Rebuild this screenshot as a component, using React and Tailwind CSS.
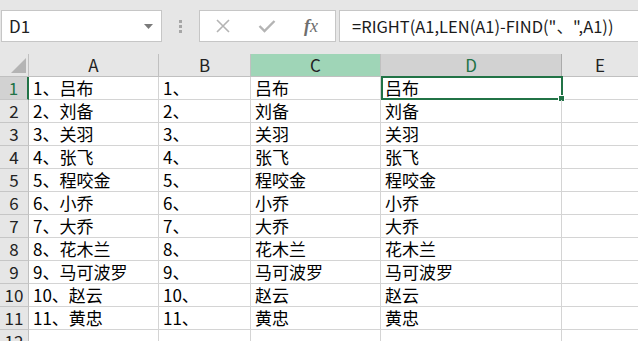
import React from "react";

const rows = [
  ["1、吕布", "1、", "吕布", "吕布"],
  ["2、刘备", "2、", "刘备", "刘备"],
  ["3、关羽", "3、", "关羽", "关羽"],
  ["4、张飞", "4、", "张飞", "张飞"],
  ["5、程咬金", "5、", "程咬金", "程咬金"],
  ["6、小乔", "6、", "小乔", "小乔"],
  ["7、大乔", "7、", "大乔", "大乔"],
  ["8、花木兰", "8、", "花木兰", "花木兰"],
  ["9、马可波罗", "9、", "马可波罗", "马可波罗"],
  ["10、赵云", "10、", "赵云", "赵云"],
  ["11、黄忠", "11、", "黄忠", "黄忠"],
];

const font = { fontFamily: '"Noto Sans CJK SC", "Liberation Sans", sans-serif' };

function FormulaBar() {
  return (
    <div className="h-[54px] bg-[#e6e6e6] flex items-start pt-[10px]">
      {/* name box */}
      <div className="ml-[1px] w-[161px] h-[32px] bg-white border border-[#c6c6c6] flex items-center pl-[7px] pr-[8px]">
        <span className="flex-1 text-[17px] text-[#222]">D1</span>
        <svg width="9" height="5" viewBox="0 0 9 5">
          <path d="M0 0 L9 0 L4.5 5 Z" fill="#7a7a7a" />
        </svg>
      </div>
      {/* drag dots */}
      <div className="w-[37px] h-[32px] flex flex-col items-center justify-center gap-[2px]">
        <div className="w-[3px] h-[3px] bg-[#a6a6a6]" />
        <div className="w-[3px] h-[3px] bg-[#a6a6a6]" />
        <div className="w-[3px] h-[3px] bg-[#a6a6a6]" />
      </div>
      {/* icons */}
      <div className="w-[137px] h-[32px] bg-white border border-[#c6c6c6] flex items-center">
        <svg className="ml-[15px]" width="16" height="16" viewBox="0 0 16 16">
          <path d="M2 2 L14 14 M14 2 L2 14" stroke="#b4b4b4" strokeWidth="1.6" />
        </svg>
        <svg className="ml-[27px]" width="18" height="14" viewBox="0 0 18 14">
          <path d="M1.5 7 L6.5 12 L16.5 2" stroke="#b4b4b4" strokeWidth="2.4" fill="none" />
        </svg>
        <span className="ml-[28px] text-[18px] italic text-[#6e6e6e] leading-none" style={{ fontFamily: '"Liberation Serif", serif' }}>
          <span className="font-bold">f</span>x
        </span>
      </div>
      {/* formula */}
      <div className="ml-[3px] flex-1 h-[32px] bg-white border border-[#c6c6c6] border-r-0 flex items-center pl-[12px]">
        <span className="text-[16.5px] text-[#1a1a1a] whitespace-pre" style={font}>
          =RIGHT(A1,LEN(A1)-FIND("、",A1))
        </span>
      </div>
    </div>
  );
}

const cols = "grid-cols-[29px_130px_92px_130px_181px_1fr]";

export default function App() {
  return (
    <div className="w-[638px] h-[341px] overflow-hidden bg-white" style={font}>
      <FormulaBar />
      {/* column headers */}
      <div className={`grid ${cols} h-[23px] bg-[#e6e6e6] text-[17px] leading-[22px]`}>
        <div className="relative border-r border-b border-[#c0c0c0]">
          <svg className="absolute left-[11px] top-[4px]" width="15" height="15" viewBox="0 0 15 15">
            <path d="M15 0 L15 15 L0 15 Z" fill="#b4b4b4" />
          </svg>
        </div>
        <div className="text-center border-r border-b border-[#c0c0c0] text-[#222]">A</div>
        <div className="text-center border-r border-b border-[#c0c0c0] text-[#222]">B</div>
        <div className="text-center border-r border-b border-[#c0c0c0] bg-[#9fd5b7] text-[#222]">C</div>
        <div className="text-center border-r border-b border-[#ababab] bg-[#d2d2d2] text-[#217346]">D</div>
        <div className="text-center border-b border-[#c0c0c0] text-[#222]">E</div>
      </div>
      {/* rows */}
      {rows.concat([["", "", "", ""]]).map((r, i) => (
        <div key={i} className={`grid ${cols} h-[23px] text-[17px] leading-[22px]`}>
          <div
            className={`text-center border-b border-[#c6c6c6] ${
              i === 0 ? "bg-[#d2d2d2] text-[#217346] border-r-2 border-r-[#217346]" : "bg-[#e6e6e6] text-[#222] border-r border-r-[#c0c0c0]"
            }`}
          >
            {i + 1}
          </div>
          {r.map((c, j) => (
            <div key={j} className="relative pl-[4px] border-r border-b border-[#d4d4d4] whitespace-nowrap text-black">
              {c}
              {i === 0 && j === 3 && (
                <div className="absolute left-0 top-[-1px] w-[182px] h-[24px] border-2 border-[#217346]">
                  <div className="absolute right-[-4px] bottom-[-4px] w-[7px] h-[7px] bg-[#217346] border border-white" />
                </div>
              )}
            </div>
          ))}
          <div className="border-b border-[#d4d4d4]" />
        </div>
      ))}
    </div>
  );
}
